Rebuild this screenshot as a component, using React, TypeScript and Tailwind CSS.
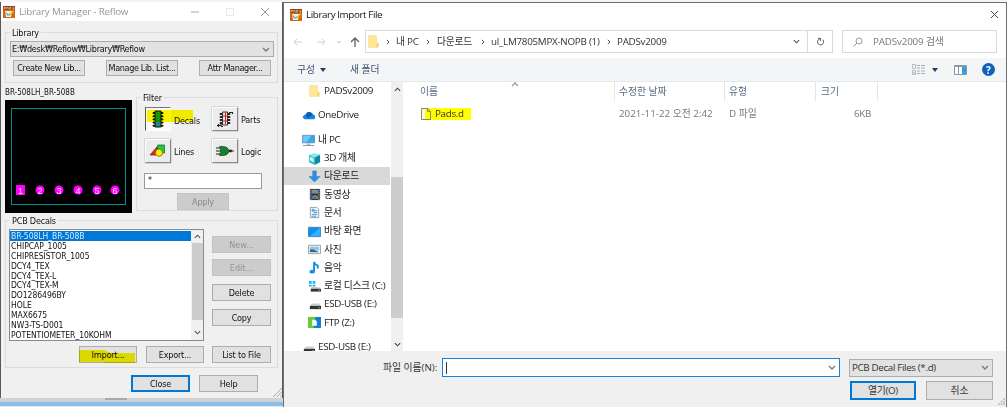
import React from 'react';

type Kids = { children?: React.ReactNode; className?: string };

const TAHOMA = "font-['DejaVu_Sans_Condensed','DejaVu_Sans','Noto_Sans_CJK_KR',sans-serif] [font-stretch:condensed]";
const MALGUN = "font-['Open_Sans','Noto_Sans_CJK_KR',sans-serif] [font-stretch:normal]";

function Chevron({ className = '', up = false }: { className?: string; up?: boolean }) {
  return (
    <svg viewBox="0 0 8 5" className={className} fill="none" stroke="currentColor" strokeWidth="1.300">
      <path d={up ? 'M1 4 4 1 7 4' : 'M1 1 4 4 7 1'} />
    </svg>
  );
}

function PadsLogo() {
  return (
    <svg viewBox="0 0 12 12" className="h-3 w-3 shrink-0">
      <rect width="12" height="12" fill="#d9650c" />
      <path d="M0 0h12v4H0z" fill="#8c3a0e" />
      <path d="M1 1v2.500M1 1.300h1.500v1H1M3.700 3.500v-2h1.500v2M6.500 1.200v2h1.300v-2zM9.500 1.300h1.800M9.500 2.300h1.500v1H9.300" stroke="#ffd9a8" strokeWidth=".6" fill="none" />
      <path d="M2 5h7l-1 6H3z" fill="#e9f1ee" />
      <path d="M6 9.500 10.500 5" stroke="#f4c22b" strokeWidth="1.500" fill="none" />
      <path d="m3 6.500 2 3 2-2" stroke="#3a8fa8" fill="none" />
    </svg>
  );
}

function Btn({ children, className = '' }: Kids) {
  return (
    <div className={`flex h-4 shrink-0 items-center justify-center border border-[#adadad] bg-[#e1e1e1] whitespace-nowrap ${className}`}>
      {children}
    </div>
  );
}

function Group({ title, children, className = '' }: Kids & { title: string }) {
  return (
    <div className={`border border-[#dcdcdc] ${className}`}>
      <div className="-mt-[5px] ml-[4px] h-[10px] w-fit bg-[#f0f0f0] px-[2px] leading-[10px]">{title}</div>
      {children}
    </div>
  );
}

const decals = ['BR-508LH_BR-508B', 'CHIPCAP_1005', 'CHIPRESISTOR_1005', 'DCY4_TEX', 'DCY4_TEX-L', 'DCY4_TEX-M', 'DO1286496BY', 'HOLE', 'MAX6675', 'NW3-TS-D001', 'POTENTIOMETER_10KOHM'];

function Tool({ children, label, pressed = false }: Kids & { label: string; pressed?: boolean }) {
  return (
    <div className="flex items-center gap-[3px]">
      <div className={`flex h-6 w-[26px] items-center justify-center border ${pressed ? 'border-t-[#777] border-r-white border-b-white border-l-[#555] bg-[#fafafa]' : 'border-t-white border-r-[#888] border-b-[#888] border-l-white bg-[#ececec] shadow-[0_0_0_0.5px_#bbb]'}`}>
        {children}
      </div>
      <span className={pressed ? 'pt-1' : 'pt-px'}>{label}</span>
    </div>
  );
}

function DecalsIcon() {
  return (
    <svg viewBox="0 0 12 18" className="h-[18px] w-3">
      <path d="M1.500 3h9M1.500 6.200h9M1.500 9.400h9M1.500 12.600h9M1.500 15.800h9" stroke="#111" strokeWidth="1.900" strokeLinecap="round" />
      <path d="M3 1h6v16H3z" fill="#149b35" stroke="#151515" />
      <path d="M4 10h4v6H4z" fill="#168b98" />
    </svg>
  );
}

function PartsIcon() {
  return (
    <svg viewBox="0 0 18 18" className="h-[18px] w-[18px]" fill="none">
      <path d="M4.500 4h9M4.500 7h9M4.500 10h9M4.500 13h9" stroke="#1c1c1c" strokeWidth="1.800" strokeLinecap="round" />
      <path d="M6.500 2h5v13h-5z" fill="#e6e6e6" stroke="#333" />
      <path d="M9.500 2v12M7 6h5M7 11h4" stroke="#d22" />
      <path d="M13 2.500h3.500V4M1 15.500h4V13M2.500 14v3M5 16.500h2" stroke="#222" strokeWidth="1.200" />
    </svg>
  );
}

function LinesIcon() {
  return (
    <svg viewBox="0 0 18 14" className="h-[14px] w-[18px]">
      <path d="M8.500 1h7v8h-7z" fill="#16cd43" stroke="#076623" strokeWidth=".7" />
      <path d="M1 11 8 3v8z" fill="#ef1d20" stroke="#75151a" strokeWidth=".7" />
      <circle cx="10" cy="8.700" r="3.600" fill="#ffed00" stroke="#5d5d17" strokeWidth=".7" />
    </svg>
  );
}

function LogicIcon() {
  return (
    <svg viewBox="0 0 20 12" className="h-3 w-5">
      <path d="M1 3h5M1 6h6M1 9h5M14 6h5" stroke="#222" strokeWidth="1.200" />
      <path d="M4.500 1.500h4q4 0 6 4.500-2 4.500-6 4.500h-4q2.500-4.500 0-9z" fill="#15802c" stroke="#134421" strokeWidth=".7" />
      <circle cx="15.500" cy="6" r="1.400" fill="#222" />
    </svg>
  );
}

function LibraryManager() {
  return (
    <section className={`absolute top-[2px] left-px flex h-[396px] w-[281px] flex-col bg-[#f0f0f0] text-[9px] leading-[10px] tracking-[-0.2px] text-[#111] ${TAHOMA}`}>
      <header className={`flex h-[19px] shrink-0 items-center bg-white pl-[2px] text-[9.8px] tracking-[-0.2px] text-[#969696] ${MALGUN}`}>
        <PadsLogo />
        <span className="ml-[4px] w-[160px] whitespace-nowrap">Library Manager - Reflow</span>
        <svg viewBox="0 0 82 10" className="ml-[10px] h-[10px] w-[82px]" fill="none">
          <path d="M2 5h8" stroke="#aaa" />
          <path d="M37.500 1.500h7v7h-7z" stroke="#e8e8e8" />
          <path d="m72 1 8 8m0-8-8 8" stroke="#999" />
        </svg>
      </header>
      <Group title="Library" className="mt-[11px] ml-1 h-[51px] w-[273px] shrink-0">
        <div className="mt-[3px] ml-1 flex h-4 w-[264px] items-center justify-between border border-[#adadad] bg-[#e2e2e2] pr-[3px] pl-px">
          <span className="tracking-[-0.28px]">E:₩desk₩Reflow₩Library₩Reflow</span>
          <Chevron className="h-[5px] w-2 text-[#777]" />
        </div>
        <div className="mt-[3px] ml-[7px] flex gap-[21px]">
          <Btn className="w-[72px] tracking-[-0.35px]">Create New Lib...</Btn>
          <Btn className="w-[72px] tracking-[-0.35px]">Manage Lib. List...</Btn>
          <Btn className="w-[72px] tracking-[-0.35px]">Attr Manager...</Btn>
        </div>
      </Group>
      <div className="flex h-[128px] shrink-0 pl-1">
        <div className="w-[127px] shrink-0 pt-[5px] text-[8px] tracking-normal">
          <div className="h-[10px] whitespace-nowrap">BR-508LH_BR-508B</div>
          <svg viewBox="0 0 127 113" className="mt-[2px] h-[113px] w-[127px] bg-black">
            <rect x="6.500" y="8.500" width="114" height="96" fill="none" stroke="#00918f" />
            <rect x="11" y="85" width="9" height="10" fill="#ff00ff" />
            {[35, 54, 73, 92, 110].map((x) => <circle key={x} cx={x} cy="90" r="4.500" fill="#ff00ff" />)}
            {[15.5, 35, 54, 73, 92, 110].map((x, i) => <text key={x} x={x} y="93.500" fontSize="9" textAnchor="middle" fill="#ffd9ff" fontFamily="Liberation Sans">{i + 1}</text>)}
          </svg>
        </div>
        <Group title="Filter" className="mt-[14px] ml-1 h-[114px] w-[142px]">
          <div className="relative mt-[4px] ml-2 grid grid-cols-[67px_60px] gap-y-2">
            <Tool label="Decals" pressed><DecalsIcon /></Tool>
            <Tool label="Parts"><PartsIcon /></Tool>
            <Tool label="Lines"><LinesIcon /></Tool>
            <Tool label="Logic"><LogicIcon /></Tool>
            <div className="absolute top-[3px] left-[2px] h-3 w-[46px] bg-[#fff800] mix-blend-multiply" />
          </div>
          <div className="mt-[10px] ml-[7px] h-4 w-[118px] border border-[#999] bg-white pt-px pl-[3px]">*</div>
          <Btn className="mt-1 ml-10 h-[17px] w-[52px] !border-[#c5c5c5] !bg-[#cccccc] text-[#888]">Apply</Btn>
        </Group>
      </div>
      <Group title="PCB Decals" className="mt-[9px] ml-1 h-[148px] w-[273px] shrink-0">
        <div className="mt-[3px] ml-[3px] flex">
          <div className="flex h-[112px] w-[195px] border border-[#858b94] bg-white">
            <ul className="w-[181px] overflow-hidden pt-px text-[8.5px] leading-[10px] tracking-[-0.05px]">
              {decals.map((d, i) => <li key={d} className={`h-[9.9px] pl-px whitespace-nowrap ${i === 0 ? 'bg-[#0078d7] text-[#d9ebfa]' : ''}`}>{d}</li>)}
            </ul>
            <div className="flex w-3 flex-col items-center bg-[#f0f0f0] text-[#555]">
              <div className="flex h-[13px] items-center"><Chevron up className="h-[5px] w-[7px]" /></div>
              <div className="h-[77px] w-[11px] bg-[#cdcdcd]" />
              <div className="flex grow items-center pt-[4px]"><Chevron className="h-[5px] w-[7px]" /></div>
            </div>
          </div>
          <div className="ml-2 pt-[7px] tracking-normal">
            <Btn className="h-[17px] w-[59px] !border-[#c2c2c2] !bg-[#cccccc] text-[#929292]">New...</Btn>
            <Btn className="mt-[6px] h-[17px] w-[59px] !border-[#c2c2c2] !bg-[#cccccc] text-[#929292]">Edit...</Btn>
            <Btn className="mt-2 h-[17px] w-[59px] tracking-[-0.2px]">Delete</Btn>
            <Btn className="mt-2 h-[17px] w-[59px] tracking-[-0.2px]">Copy</Btn>
          </div>
        </div>
        <div className="mt-[5px] ml-[73px] flex">
          <div className="relative">
            <Btn className="h-[17px] w-[58px]">Import...</Btn>
            <svg viewBox="0 0 58 15" className="absolute top-1 left-0 h-[15px] w-[58px] mix-blend-multiply">
              <path d="M0 0h25l7 3h24v10H28l-5-1H0z" fill="#f9f600" />
            </svg>
          </div>
          <Btn className="ml-[9px] h-[17px] w-[58px]">Export...</Btn>
          <Btn className="ml-2 h-[17px] w-[59px]">List to File</Btn>
        </div>
      </Group>
      <footer className="mt-[7px] flex shrink-0 pl-[130px]">
        <Btn className="h-[17px] w-[59px] !border-2 !border-[#0078d7]">Close</Btn>
        <Btn className="ml-[9px] h-[17px] w-[59px]">Help</Btn>
        <svg viewBox="0 0 10 10" className="mt-[13px] ml-[15px] h-[9px] w-[9px]" stroke="#a0a0a0"><path d="m0 10 10-10M4 10l6-6M8 10l2-2" /></svg>
      </footer>
    </section>
  );
}

function Folder({ className = '' }: { className?: string }) {
  return (
    <svg viewBox="0 0 11 13" className={className} preserveAspectRatio="none">
      <path d="M.5.5h8v7h2v5H.5z" fill="#f3cf6e" />
      <path d="M.5.5h8.500v8l-1 4H.5z" fill="#ffe597" />
    </svg>
  );
}

const icons: Record<string, React.ReactNode> = {
  cloud: <><path d="M3 11q-3-1-2-3t3-2q2-4 6-2l2 2q3 1 2 4l-1 1z" fill="#1685db" /><path d="M4 6q2-4 6-2l2 2-6 4z" fill="#0860b4" /></>,
  pc: <><path d="M.5 2.500h13v8H.5z" fill="#35a8ed" stroke="#6197b9" /><path d="M1 3h9L5 10H1z" fill="#6cc6f7" /><path d="M5 12h4M1 13.500h12" stroke="#8097a8" /></>,
  cube: <><path d="m1 3 6-2 6 2-6 3z" fill="#8aeaf3" /><path d="m1 3 6 3v8l-6-3z" fill="#38becd" /><path d="m7 6 6-3v8l-6 3z" fill="#078ca3" /><path d="m2 5 4 2v4l-4-2z" fill="#d8f7fa" /></>,
  down: <path d="M5 1h4v6h4l-6 6-6-6h4z" fill="#2f8de4" stroke="#257ac8" strokeWidth=".5" />,
  film: <><path d="M2 1h11v12H2z" fill="#333" /><path d="M4 2h7v4H4z" fill="#648bc4" /><path d="M4 8h7v4H4z" fill="#476d9d" /><path d="m4 4 3-2 4 4M5 11l3-3 3 4" stroke="#c99b39" fill="none" /><path d="M3 2v11M12 2v11" stroke="#ccc" strokeDasharray="1 1" /></>,
  doc: <><path d="M2.500 1.500h7l2 2v9h-9z" fill="#f5fbff" stroke="#919ba1" /><path d="M4 5h6M6 7h4M4 9h6M4 11h5" stroke="#3295d1" /><path d="M4 3h3v3H4z" fill="#55aee0" /></>,
  desktop: <><path d="M.5 2.500h13v10H.5z" fill="#0b91ed" stroke="#3d83b5" /><path d="M2 12 13 3v9z" fill="#35b0ff" /></>,
  photo: <><path d="M.5 2.500h13v9H.5z" fill="#eef7fc" stroke="#9a9a9a" /><path d="M2 4h10v4H2z" fill="#8dc6ee" /><path d="m2 7 4 0 6 3H2z" fill="#386582" /></>,
  music: <><path d="M6.500 11V1q1 3 4 4v3" stroke="#0c91eb" strokeWidth="2" fill="none" /><ellipse cx="4.500" cy="11.500" rx="3" ry="2" fill="#0c91eb" /></>,
  disk: <><path d="M1 1h3v3H1zM5 1h3v3H5zM1 5h3v2H1zM5 5h3v2H5z" fill="#22b5ed" /><path d="m4 7 9 1v2H3z" fill="#c9c9c9" /><path d="M3 9.500h11v3H3z" fill="#333" /><path d="M11 11h2" stroke="#56d95e" /></>,
  usb: <><path d="m4 6 8 0 2 3H2z" fill="#cdcdcd" /><path d="M2 8.500h12V12H2z" fill="#333" /><path d="M11 10.500h2" stroke="#56d95e" /></>,
  ftp: <><path d="M0 1h14v12H0z" fill="#6acb38" /><path d="M8 1h6v12H6z" fill="#127edc" /><path d="M4.500 4h3l2 2v4.500h-5z" fill="white" /></>,
};

const tree: { icon: string; label: string; gap: string; indent: string; on?: boolean }[] = [
  { icon: 'cloud', label: 'OneDrive', gap: 'mt-[6px]', indent: 'pl-[18px]' },
  { icon: 'pc', label: '내 PC', gap: 'mt-[6px]', indent: 'pl-[18px]' },
  { icon: 'cube', label: '3D 개체', gap: '', indent: 'pl-6' },
  { icon: 'down', label: '다운로드', gap: '', indent: 'pl-6', on: true },
  { icon: 'film', label: '동영상', gap: '', indent: 'pl-6' },
  { icon: 'doc', label: '문서', gap: '', indent: 'pl-6' },
  { icon: 'desktop', label: '바탕 화면', gap: '', indent: 'pl-6' },
  { icon: 'photo', label: '사진', gap: '', indent: 'pl-6' },
  { icon: 'music', label: '음악', gap: '', indent: 'pl-6' },
  { icon: 'disk', label: '로컬 디스크 (C:)', gap: '', indent: 'pl-6' },
  { icon: 'usb', label: 'ESD-USB (E:)', gap: '', indent: 'pl-6' },
  { icon: 'ftp', label: 'FTP (Z:)', gap: '', indent: 'pl-6' },
  { icon: 'usb', label: 'ESD-USB (E:)', gap: 'mt-[6px]', indent: 'pl-[18px]' },
];

function Sidebar() {
  return (
    <nav className="flex h-[269px] w-[119px] shrink-0 overflow-hidden">
      <div className="w-[107px] tracking-[-0.3px] text-[#222]">
        <div className="flex h-[18.3px] items-center pl-[25px]">
          <Folder className="h-3 w-[11px]" /><span className="ml-1">PADSv2009</span>
        </div>
        {tree.map((t, i) => (
          <div key={i} className={`flex h-[18.3px] items-center gap-[3px] whitespace-nowrap ${t.gap} ${t.indent} ${t.on ? 'mr-px bg-[#d9d9d9]' : ''}`}>
            <svg viewBox="0 0 14 14" className="h-[13px] w-[13px] shrink-0">{icons[t.icon]}</svg>
            <span>{t.label}</span>
          </div>
        ))}
      </div>
      <div className="flex w-3 flex-col items-center bg-[#f0f0f0] text-[#444]">
        <Chevron up className="mt-[5px] h-[5px] w-[7px]" />
        <div className="mt-[85px] h-[141px] w-3 bg-[#cdcdcd]" />
        <Chevron className="mt-6 h-[5px] w-[7px]" />
      </div>
    </nav>
  );
}

function ImportDialog() {
  return (
    <section className={`absolute top-[2px] left-[283px] flex h-[405px] w-[724px] flex-col border-t border-r border-l border-[#707070] bg-white text-[9.8px] leading-[16px] text-[#333] ${MALGUN}`}>
      <header className="flex h-[23px] shrink-0 items-center pl-[6px] text-[#111]">
        <PadsLogo />
        <span className="ml-1 grow tracking-[-0.4px]">Library Import File</span>
        <svg viewBox="0 0 9 9" className="mr-[7px] h-[9px] w-[9px]" stroke="#444"><path d="m1 1 7 7m0-7-7 7" /></svg>
      </header>
      <div className="mt-1 flex h-[23px] shrink-0 items-center">
        <svg viewBox="0 0 81 12" className="h-3 w-[81px]" fill="none">
          <path d="M18 6h-8m3-3-3 3 3 3M33 6h8m-3-3 3 3-3 3" stroke="#cecece" />
          <path d="m53 5 2 2 2-2" stroke="#bbb" />
          <path d="M71 11V2m-4 4 4-4 4 4" stroke="#606060" strokeWidth="1.300" />
        </svg>
        <div className="flex h-[23px] w-[468px] items-center border border-[#d9d9d9] tracking-[-0.25px]">
          <Folder className="ml-[2px] h-[13px] w-[11px]" />
          <Crumb className="w-[17px]" /><span className="w-[22px] whitespace-nowrap">내 PC</span>
          <Crumb className="w-[19px]" /><span className="w-[37px] whitespace-nowrap">다운로드</span>
          <Crumb className="w-[17px]" /><span className="w-[109px] whitespace-nowrap">ul_LM7805MPX-NOPB (1)</span>
          <Crumb className="w-[17px]" /><span className="w-[50px]">PADSv2009</span>
          <Chevron className="mr-[7px] ml-auto h-[5px] w-[7px] text-[#555]" />
          <div className="flex h-[21px] w-[25px] items-center justify-center border-l border-[#d9d9d9]">
            <svg viewBox="0 0 10 10" className="h-[9px] w-[9px]" fill="none" stroke="#555"><path d="M2 1.500h3v3M5 2a3.400 3.400 0 1 0 2.500 1" /></svg>
          </div>
        </div>
        <div className="ml-[9px] flex h-[23px] w-[155px] items-center border border-[#d9d9d9] pl-[10px] tracking-[-0.15px] text-[#777]">
          <svg viewBox="0 0 10 10" className="h-[10px] w-[10px]" fill="none" stroke="#999"><circle cx="6" cy="4" r="3" /><path d="M4 6 .5 9.500" /></svg>
          <span className="ml-[10px]">PADSv2009 검색</span>
        </div>
      </div>
      <div className="mt-[5px] flex h-6 shrink-0 items-center border-b border-[#e8e8e8] bg-[#f4f5f7] pl-[13px] text-[#405371]">
        <span className="w-[23px]">구성</span>
        <svg viewBox="0 0 6 4" className="h-1 w-[6px]"><path d="M0 0h6L3 4z" fill="#213e67" /></svg>
        <span className="ml-6 grow">새 폴더</span>
        <svg viewBox="0 0 14 11" className="h-[11px] w-[14px]" fill="none">
          <path d="M.5.500h3v4h-3zM.5 6.500h3v4h-3z" stroke="#bbb" /><path d="M5 1.500h3m1 0h4M5 4h3m1 0h4M5 7h3m1 0h4M5 9.500h3m1 0h4" stroke="#a3aeb9" /><path d="M1 9h2" stroke="#e7a39b" />
        </svg>
        <svg viewBox="0 0 6 4" className="ml-[6px] h-1 w-[6px]"><path d="M0 0h6L3 4z" fill="#213e67" /></svg>
        <svg viewBox="0 0 13 10" className="ml-4 h-[10px] w-[13px]"><path d="M.5.500h12v9H.5z" fill="white" stroke="#8797a4" /><path d="M1 1.500h11M4.500 2v7" stroke="#8797a4" /><path d="M8 2h4v7H8z" fill="#329be8" /></svg>
        <div className="mr-[11px] ml-[15px] flex h-[13px] w-[13px] items-center justify-center rounded-full bg-[#0b64b7] text-[10px] font-bold text-white">?</div>
      </div>
      <div className="flex h-[269px] shrink-0 overflow-hidden">
        <Sidebar />
        <div className="w-[603px]">
          <div className="flex h-[19px] items-center text-[#566b84]">
            <div className="flex h-[19px] w-[212px] items-center border-r border-[#e5e5e5] pl-[17px]">
              <span className="w-[91px]">이름</span><Chevron up className="-mt-[15px] h-[5px] w-2 text-[#999]" />
            </div>
            <div className="h-[19px] w-[110px] border-r border-[#e5e5e5] pt-[2px] pl-1">수정한 날짜</div>
            <div className="h-[19px] w-[91px] border-r border-[#e5e5e5] pt-[2px] pl-1">유형</div>
            <div className="h-[19px] w-[62px] border-r border-[#e5e5e5] pt-[2px] pl-[5px]">크기</div>
          </div>
          <div className="mt-[6px] flex h-[13px] items-center whitespace-nowrap text-[#777]">
            <div className="w-[216px] pl-[18px]">
              <div className="flex h-3 w-[50px] items-center bg-[#ffff00] text-[#333]">
                <svg viewBox="0 0 10 12" className="h-3 w-[10px]" fill="none"><path d="M0 0h4v12H0z" fill="#f6f6f6" /><path d="M.5.500h6l3 3v8h-9zM6.500.500v3h3" stroke="#8a8a58" /></svg>
                <span className="ml-1 tracking-[-0.3px]">Pads.d</span>
              </div>
            </div>
            <span className="w-[110px]">2021-11-22 오전 2:42</span>
            <span className="w-[75px]">D 파일</span>
            <span className="w-[67px] text-right tracking-[-0.3px]">6KB</span>
          </div>
        </div>
      </div>
      <footer className="grow bg-[#f0f0f0]">
        <div className="flex items-center pt-[7px] pl-[99px]">
          <span className="w-[59px] whitespace-nowrap">파일 이름(N):</span>
          <div className="flex h-[19px] w-[398px] items-center justify-between border border-[#1684d9] bg-white pr-[3px] pl-[3px]">
            <div className="h-3 w-px bg-[#333]" /><Chevron className="h-[5px] w-2 text-[#777]" />
          </div>
          <div className="ml-[9px] flex h-[18px] w-[144px] items-center justify-between border border-[#adadad] bg-[#e2e2e2] pr-[3px] pl-[2px]">
            <span className="tracking-[-0.35px]">PCB Decal Files (*.d)</span><Chevron className="h-[5px] w-2 text-[#777]" />
          </div>
        </div>
        <div className="mt-1 flex pl-[566px]">
          <Btn className="h-[19px] w-[66px] !border-2 !border-[#0078d7] tracking-[-0.3px]">열기(O)</Btn>
          <Btn className="ml-[10px] h-[19px] w-[67px]">취소</Btn>
          <svg viewBox="0 0 8 8" className="mt-[17px] ml-[5px] h-[7px] w-[7px]" fill="#bbb"><path d="M6 0h2v2H6zM3 3h2v2H3zM6 3h2v2H6zM0 6h2v2H0zM3 6h2v2H3zM6 6h2v2H6z" /></svg>
        </div>
      </footer>
    </section>
  );
}

function Crumb({ className = '' }: { className?: string }) {
  return (
    <span className={`flex shrink-0 justify-center ${className}`}>
      <svg viewBox="0 0 4 6" className="h-[6px] w-1" fill="none" stroke="#555"><path d="m.8.800 2.200 2.200L.8 5.200" /></svg>
    </span>
  );
}

export default function App() {
  return (
    <main className="relative flex h-[407px] w-[1007px] flex-col overflow-hidden bg-[#5a5a5a]">
      <div className="h-[2px] bg-[#f4f4f4]" />
      <div className="mt-auto h-1 bg-[#d2d2d2]">
        <div className="ml-[105px] h-[2px] w-[22px] bg-[#aaaaaa]" />
      </div>
      <div className="h-[5px] border-b border-[#d5ecfc] bg-[#86bfe9]" />
      <LibraryManager />
      <ImportDialog />
    </main>
  );
}
